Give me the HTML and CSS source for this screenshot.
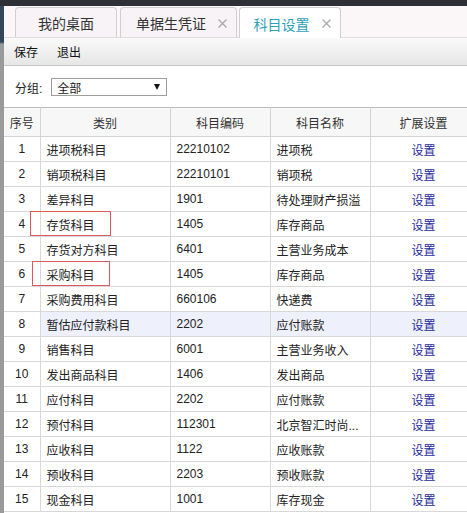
FILE: index.html
```html
<!DOCTYPE html>
<html>
<head>
<meta charset="utf-8">
<link rel="stylesheet" href="styles.css">
</head>
<body>
<div class="topbar"></div>
<div class="frame">
  <div class="strip"></div>
  <div class="main">
    <div class="tabbar">
      <div class="tab t1">我的桌面</div>
      <div class="tab t2">单据生凭证<svg class="x" width="9" height="9" viewBox="0 0 9 9"><path d="M0.5 0.5L8.5 8.5M8.5 0.5L0.5 8.5"/></svg></div>
      <div class="tab t3 active">科目设置<svg class="x" width="9" height="9" viewBox="0 0 9 9"><path d="M0.5 0.5L8.5 8.5M8.5 0.5L0.5 8.5"/></svg></div>
    </div>
    <div class="toolbar">
      <span class="tbtn">保存</span>
      <span class="tbtn">退出</span>
    </div>
    <div class="filter">
      <span class="flabel">分组:</span>
      <div class="select"><span>全部</span><i class="arrow"></i></div>
    </div>
    <div class="tablewrap">
      <table class="grid">
        <colgroup>
          <col class="c1"><col class="c2"><col class="c3"><col class="c4"><col class="c5">
        </colgroup>
        <thead>
          <tr><th>序号</th><th>类别</th><th>科目编码</th><th>科目名称</th><th>扩展设置</th></tr>
        </thead>
        <tbody>
          <tr><td class="n">1</td><td>进项税科目</td><td>22210102</td><td>进项税</td><td class="l"><a>设置</a></td></tr>
          <tr><td class="n">2</td><td>销项税科目</td><td>22210101</td><td>销项税</td><td class="l"><a>设置</a></td></tr>
          <tr><td class="n">3</td><td>差异科目</td><td>1901</td><td>待处理财产损溢</td><td class="l"><a>设置</a></td></tr>
          <tr><td class="n">4</td><td>存货科目</td><td>1405</td><td>库存商品</td><td class="l"><a>设置</a></td></tr>
          <tr><td class="n">5</td><td>存货对方科目</td><td>6401</td><td>主营业务成本</td><td class="l"><a>设置</a></td></tr>
          <tr><td class="n">6</td><td>采购科目</td><td>1405</td><td>库存商品</td><td class="l"><a>设置</a></td></tr>
          <tr><td class="n">7</td><td>采购费用科目</td><td>660106</td><td>快递费</td><td class="l"><a>设置</a></td></tr>
          <tr class="hl"><td class="n">8</td><td>暂估应付款科目</td><td>2202</td><td>应付账款</td><td class="l"><a>设置</a></td></tr>
          <tr><td class="n">9</td><td>销售科目</td><td>6001</td><td>主营业务收入</td><td class="l"><a>设置</a></td></tr>
          <tr><td class="n">10</td><td>发出商品科目</td><td>1406</td><td>发出商品</td><td class="l"><a>设置</a></td></tr>
          <tr><td class="n">11</td><td>应付科目</td><td>2202</td><td>应付账款</td><td class="l"><a>设置</a></td></tr>
          <tr><td class="n">12</td><td>预付科目</td><td>112301</td><td>北京智汇时尚...</td><td class="l"><a>设置</a></td></tr>
          <tr><td class="n">13</td><td>应收科目</td><td>1122</td><td>应收账款</td><td class="l"><a>设置</a></td></tr>
          <tr><td class="n">14</td><td>预收科目</td><td>2203</td><td>预收账款</td><td class="l"><a>设置</a></td></tr>
          <tr><td class="n">15</td><td>现金科目</td><td>1001</td><td>库存现金</td><td class="l"><a>设置</a></td></tr>
        </tbody>
      </table>
      <div class="mark m1"></div>
      <div class="mark m2"></div>
    </div>
  </div>
</div>
</body>
</html>
```

FILE: styles.css
```css
html, body {
  margin: 0;
  padding: 0;
  background: #fff;
  overflow: hidden;
}
body {
  font-family: "Liberation Sans", "Noto Sans CJK SC", sans-serif;
  font-size: 12px;
  color: #222;
  width: 467px;
  height: 513px;
}
.topbar {
  height: 6px;
  background: #2d3137;
}
.frame {
  display: flex;
  height: 507px;
}
.strip {
  width: 4px;
  flex: none;
  background: linear-gradient(#33475c 0, #33475c 36px, #9a9a9a 38px, #9a9a9a 100%);
}
.main {
  flex: 1;
  min-width: 0;
  display: flex;
  flex-direction: column;
}
.tabbar {
  height: 31px;
  box-sizing: border-box;
  background: #fbf7f8;
  display: flex;
  align-items: flex-end;
  padding-left: 11px;
  gap: 2px;
}
.tab {
  height: 30px;
  box-sizing: border-box;
  border: 1px solid #cfcfcf;
  border-bottom: none;
  border-radius: 4px 4px 0 0;
  background: #f8f3f6;
  font-size: 14px;
  color: #333;
  display: flex;
  align-items: center;
  justify-content: center;
  gap: 12px;
  padding-top: 1px;
}
.t1 { width: 102px; margin-right: 1px; }
.t2 { width: 117px; padding-left: 6px; }
.t3 { width: 102px; padding-left: 4px; }
.tab.active {
  background: #fff;
  color: #2c9fba;
  height: 31px;
  margin-bottom: -1px;
  position: relative;
}
.x path {
  stroke: #a8a8a8;
  stroke-width: 1.3;
  fill: none;
}
.toolbar {
  height: 29px;
  box-sizing: border-box;
  background: linear-gradient(#fafafa, #e6e6e6);
  border-bottom: 1px solid #c8c8c8;
  border-top: 1px solid #e0dcdc;
  display: flex;
  align-items: center;
  padding-left: 10px;
  gap: 19px;
  font-size: 12px;
  color: #111;
}
.filter {
  height: 41px;
  box-sizing: border-box;
  display: flex;
  align-items: center;
  padding-left: 11px;
  padding-top: 1px;
  gap: 9px;
  color: #222;
}
.select {
  width: 116px;
  height: 18px;
  box-sizing: border-box;
  border: 1px solid #9e9e9e;
  background: #fff;
  display: flex;
  align-items: center;
  justify-content: space-between;
  padding: 0 6px 0 5px;
}
.arrow {
  width: 0;
  height: 0;
  border-left: 3.5px solid transparent;
  border-right: 3.5px solid transparent;
  border-top: 6px solid #111;
}
.tablewrap {
  position: relative;
  flex: 1;
}
.grid {
  border-collapse: collapse;
  table-layout: fixed;
  width: 473px;
}
.c1 { width: 36px; }
.c2 { width: 130px; }
.c3 { width: 100px; }
.c4 { width: 100px; }
.c5 { width: 107px; }
.grid th {
  height: 29px;
  box-sizing: border-box;
  font-weight: normal;
  color: #333;
  background: #f7f7f7;
  border: 1px solid #d4d4d4;
  border-top: 1px solid #bdbdbd;
  text-align: center;
  padding: 0;
}
.grid td {
  height: 25px;
  box-sizing: border-box;
  border: 1px solid #d8d8d8;
  padding: 0 0 0 6px;
  white-space: nowrap;
  overflow: hidden;
}
.grid tr > :first-child { border-left: none; }
.grid td.n {
  text-align: center;
  padding: 0;
}
.grid td.l {
  text-align: center;
  padding: 0;
}
.grid a {
  color: #1f2a9c;
}
.grid tr.hl td:not(.n) {
  background: #eef0fb;
}
.mark {
  position: absolute;
  border: 1px solid #db5a5e;
  box-sizing: border-box;
}
.m1 { left: 26px; top: 104px; width: 81px; height: 25px; }
.m2 { left: 28px; top: 154px; width: 78px; height: 25px; }
```
